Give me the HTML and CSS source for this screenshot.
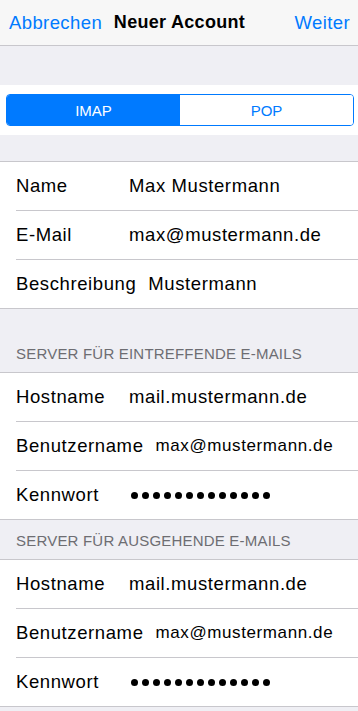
FILE: index.html
```html
<!DOCTYPE html>
<html lang="de">
<head>
    <meta charset="UTF-8">
    <meta name="viewport" content="width=device-width, initial-scale=1.0">
    <title>Neuer Account</title>
    <link rel="stylesheet" href="styles.css">
</head>
<body>
    <header class="navbar">
        <a class="nav-btn nav-left">Abbrechen</a>
        <div class="nav-title">Neuer Account</div>
        <a class="nav-btn nav-right">Weiter</a>
    </header>

    <div class="segment-band">
        <div class="segmented">
            <button class="active">IMAP</button>
            <button>POP</button>
        </div>
    </div>

    <ul class="group first-group">
        <li class="row"><span class="label">Name</span><span class="value">Max Mustermann</span></li>
        <li class="row"><span class="label">E-Mail</span><span class="value">max@mustermann.de</span></li>
        <li class="row"><span class="label">Beschreibung</span><span class="value">Mustermann</span></li>
    </ul>

    <div class="section-header tall">SERVER FÜR EINTREFFENDE E-MAILS</div>
    <ul class="group">
        <li class="row"><span class="label">Hostname</span><span class="value">mail.mustermann.de</span></li>
        <li class="row"><span class="label">Benutzername</span><span class="value small">max@mustermann.de</span></li>
        <li class="row"><span class="label">Kennwort</span><span class="dots"><i></i><i></i><i></i><i></i><i></i><i></i><i></i><i></i><i></i><i></i><i></i><i></i><i></i></span></li>
    </ul>

    <div class="section-header">SERVER FÜR AUSGEHENDE E-MAILS</div>
    <ul class="group">
        <li class="row"><span class="label">Hostname</span><span class="value">mail.mustermann.de</span></li>
        <li class="row"><span class="label">Benutzername</span><span class="value small">max@mustermann.de</span></li>
        <li class="row"><span class="label">Kennwort</span><span class="dots"><i></i><i></i><i></i><i></i><i></i><i></i><i></i><i></i><i></i><i></i><i></i><i></i><i></i></span></li>
    </ul>
</body>
</html>
```

FILE: styles.css
```css
body {
    margin: 0;
    font-family: "Liberation Sans", Arial, sans-serif;
    background: #efeff4;
    color: #000;
}
.navbar {
    display: grid;
    grid-template-columns: 1fr auto 1fr;
    align-items: center;
    height: 45px;
    padding: 0 8px 0 9px;
    background-color: #f7f7f7;
    border-bottom: 1px solid #c8c7cc;
    margin-bottom: 39px;
}
.nav-btn {
    color: #007aff;
    font-size: 18.5px;
    letter-spacing: 0.4px;
}
.nav-right {
    justify-self: end;
}
.nav-title {
    font-size: 18px;
    font-weight: bold;
    letter-spacing: 0.3px;
}
.segment-band {
    background: #fff;
    padding: 9px 4px 9px 6px;
    margin-bottom: 26px;
}
.segmented {
    display: flex;
    height: 32px;
    border: 1px solid #007aff;
    border-radius: 4px;
    overflow: hidden;
    box-sizing: border-box;
}
.segmented button {
    flex: 1;
    border: none;
    background: #fff;
    color: #007aff;
    font-family: inherit;
    font-size: 15px;
    padding: 0;
}
.segmented button.active {
    background: #007aff;
    color: #fff;
}
.group {
    list-style: none;
    margin: 0;
    padding: 0;
    background: #fff;
    border-top: 1px solid #c8c7cc;
    border-bottom: 1px solid #c8c7cc;
}
.row {
    display: flex;
    align-items: center;
    height: 48px;
    margin-left: 16px;
    border-bottom: 1px solid #c8c7cc;
    font-size: 18.5px;
    letter-spacing: 0.6px;
}
.row:last-child {
    border-bottom: none;
}
.label {
    min-width: 101px;
    margin-right: 12px;
}
.value.small {
    font-size: 17px;
}
.dots {
    display: flex;
    gap: 4px;
    margin-left: 2px;
}
.dots i {
    width: 7px;
    height: 7px;
    border-radius: 50%;
    background: #000;
}
.section-header {
    padding: 13px 16px 10px;
    font-size: 15px;
    line-height: 16px;
    color: #6d6d72;
    letter-spacing: 0.2px;
}
.section-header.tall {
    padding-top: 37px;
}
```
